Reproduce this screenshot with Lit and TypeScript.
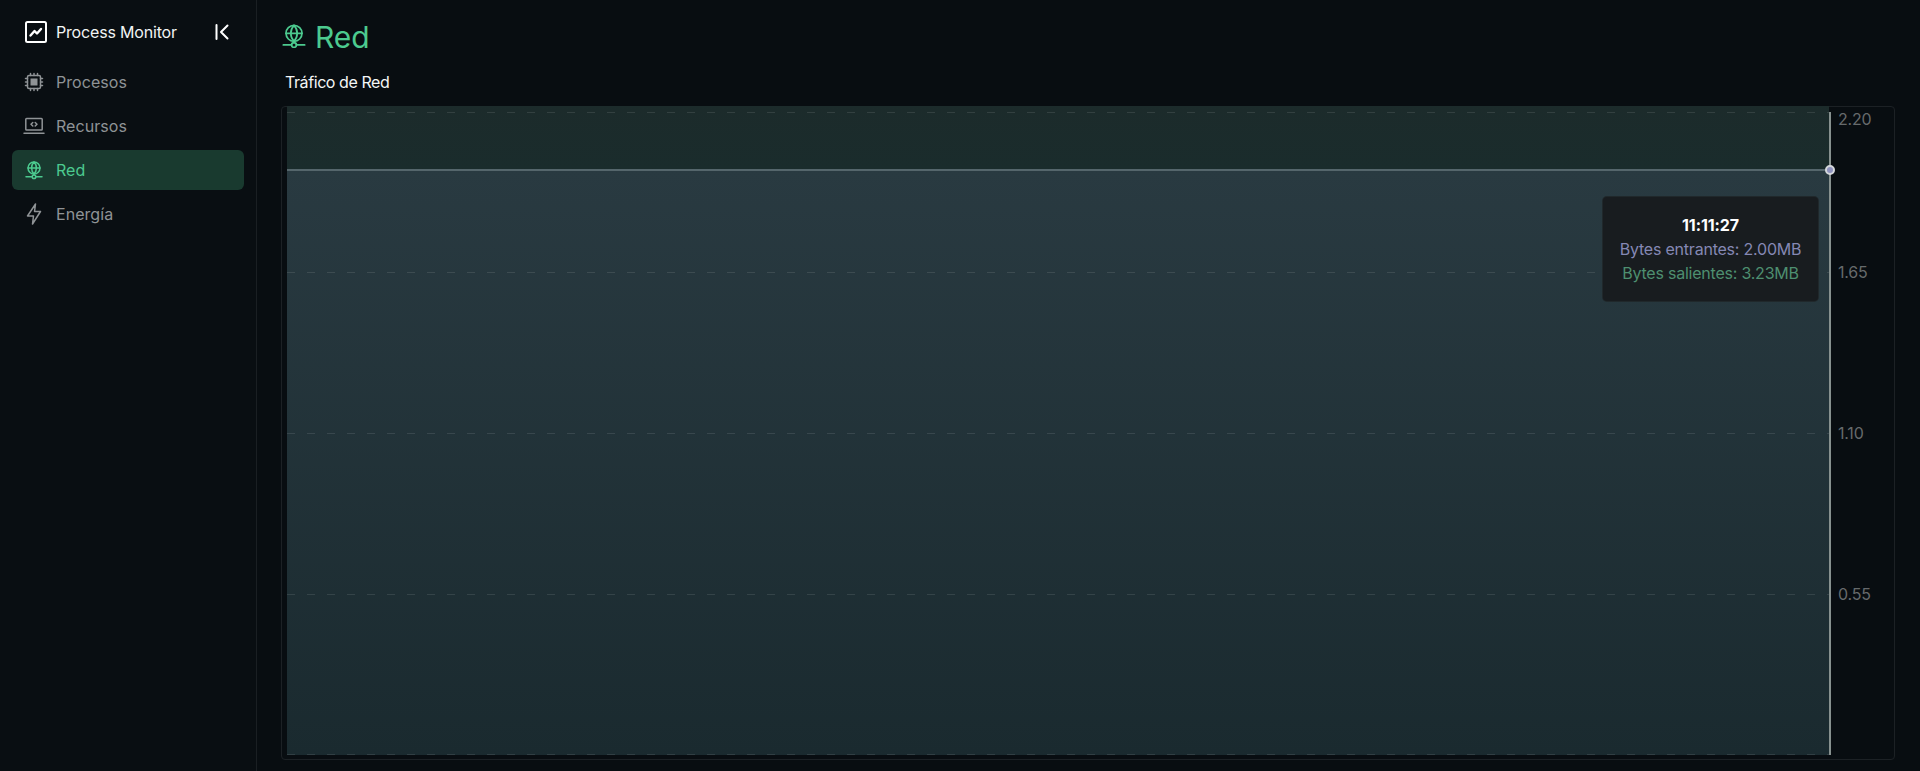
import { LitElement, html, css, svg } from "lit";
import { customElement } from "lit/decorators.js";

const globe = svg`<circle cx="12" cy="10" r="6"/><path d="M6 10h12M12 4c-3.200 3.400-3.200 8.600 0 12M12 4c3.200 3.400 3.200 8.600 0 12M12 16v1M4 18.700h6.200M13.800 18.700H20"/><circle cx="12" cy="18.700" r="1.800"/>`;

const nav = [
  { label: "Procesos", icon: svg`<rect x="5.500" y="5.500" width="13" height="13" rx="1.500"/><rect x="8.500" y="8.500" width="7" height="7" fill="currentColor" stroke="none"/><path d="M8.500 3.500v2M12 3.500v2M15.500 3.500v2M8.500 18.500v2M12 18.500v2M15.500 18.500v2M3.500 8.500h2M3.500 12h2M3.500 15.500h2M18.500 8.500h2M18.500 12h2M18.500 15.500h2"/>` },
  { label: "Recursos", icon: svg`<rect x="3.800" y="4.500" width="16.400" height="11.500" rx="0.800"/><path d="M2 19.200h20M10.800 8.500 9 10.200l1.800 1.800M13.200 8.500l1.800 1.700-1.800 1.800"/>` },
  { label: "Red", active: true, icon: globe },
  { label: "Energía", icon: svg`<path d="M13.500 2 5.500 14h6l-1 8 8-12.500h-6z"/>` },
];

const grid = [
  { y: 112.500, label: "2.20", ty: 125 },
  { y: 272.500, label: "1.65", ty: 278 },
  { y: 433.500, label: "1.10", ty: 439 },
  { y: 594.500, label: "0.55", ty: 600 },
  { y: 754.500, label: "", ty: 0 },
];

@customElement("app-root")
export class AppRoot extends LitElement {
  static styles = css`
    :host {
      display: flex;
      height: 771px;
      overflow: hidden;
      background: #080d11;
      font-family: Inter, "Noto Sans", sans-serif;
      font-size: 16px;
      color: #fff;
    }
    .side {
      box-sizing: border-box;
      flex: 0 0 257px;
      border-right: 1px solid #1a1f23;
      padding: 12px 12px 0;
      background: #090e12;
    }
    .brand {
      display: flex;
      align-items: center;
      height: 40px;
      padding-left: 13px;
      margin-bottom: 10px;
      letter-spacing: -0.18px;
    }
    .brand-name { margin-left: 9px; flex: 1; color: #f2f4f4; }
    .collapse { margin-right: 15px; display: block; }
    .logo { display: block; }
    .item {
      display: flex;
      align-items: center;
      height: 40px;
      margin-bottom: 4px;
      padding-left: 10px;
      border-radius: 6px;
      color: #8f9396;
      letter-spacing: 0.05px;
    }
    .item.active { background: #193a2f; color: #4cca8f; }
    .icon {
      width: 24px;
      height: 24px;
      margin-right: 10px;
      fill: none;
      stroke: currentColor;
      stroke-width: 1.500;
      stroke-linecap: round;
      stroke-linejoin: round;
      flex: none;
    }
    .main { flex: 1; min-width: 0; padding: 0 24px; display: flex; flex-direction: column; }
    h1 {
      margin: 0;
      height: 74px;
      padding-left: 1px;
      display: flex;
      align-items: center;
      font-size: 30px;
      font-weight: 400;
      color: #4cca8f;
      box-sizing: border-box;
    }
    .h-icon {
      width: 24px;
      height: 24px;
      margin: 0 9px 2px 0;
      fill: none;
      stroke: currentColor;
      stroke-width: 1.300;
      stroke-linecap: round;
      stroke-linejoin: round;
    }
    .sub { height: 32px; line-height: 16px; padding-left: 4px; color: #f4f6f6; letter-spacing: -0.42px; }
    .card {
      position: relative;
      width: 1614px;
      height: 654px;
      box-sizing: border-box;
      border: 1px solid #1c2125;
      border-radius: 4px;
    }
    .card svg { position: absolute; left: -282px; top: -107px; display: block; }
    .axis { fill: #666a6c; font-size: 16px; font-family: Inter, sans-serif; letter-spacing: -0.2px; }
    .tip {
      position: absolute;
      left: 1321px;
      top: 90px;
      width: 215px;
      height: 104px;
      box-sizing: border-box;
      padding-top: 16px;
      border-radius: 4px;
      background: #181c1f;
      text-align: center;
      line-height: 24px;
      letter-spacing: -0.22px;
      box-shadow: 0 0 0 1px #20282b;
    }
    .t { font-weight: 700; color: #fff; font-size: 16px; letter-spacing: -0.1px; }
    .a { color: #8588b4; }
    .b { color: #4e8f70; }
  `;

  render() {
    return html`
      <aside class="side">
        <div class="brand">
          <svg class="logo" width="22" height="22" viewBox="0 0 22 22" fill="none" stroke="#fff" stroke-linecap="round" stroke-linejoin="round">
            <rect x="1" y="1" width="20" height="20" rx="1.500" stroke-width="2"/>
            <path d="M5.500 14.500 9.500 10l2.500 2.500L16 8" stroke-width="2.400"/>
          </svg>
          <span class="brand-name">Process Monitor</span>
          <svg class="collapse" width="14" height="16" viewBox="0 0 14 16" fill="none" stroke="#fff" stroke-width="2" stroke-linecap="round" stroke-linejoin="round">
            <path d="M1.500 1v14M12.500 1.500 6 8l6.500 6.500"/>
          </svg>
        </div>
        ${nav.map(
          (n) => html`<div class="item ${n.active ? "active" : ""}">
            <svg class="icon" viewBox="0 0 24 24">${n.icon}</svg><span>${n.label}</span>
          </div>`
        )}
      </aside>
      <main class="main">
        <h1><svg class="h-icon" viewBox="3 3 18 18">${globe}</svg>Red</h1>
        <div class="sub">Tráfico de Red</div>
        <div class="card">
          <svg width="1920" height="771" viewBox="0 0 1920 771">
            <defs>
              <linearGradient id="g1" x1="0" y1="0" x2="0" y2="1">
                <stop offset="0" stop-color="#1c2b2b"/>
                <stop offset="1" stop-color="#1a2c2c"/>
              </linearGradient>
              <linearGradient id="g2" x1="0" y1="0" x2="0" y2="1">
                <stop offset="0" stop-color="#293a41"/>
                <stop offset="1" stop-color="#1a2a2f"/>
              </linearGradient>
            </defs>
            <rect x="287" y="106" width="1542" height="64" fill="url(#g1)"/>
            <rect x="287" y="170" width="1542" height="585" fill="url(#g2)"/>
            ${grid.map(
              (g) => svg`<line x1="287" x2="1829" y1=${g.y} y2=${g.y} stroke="#ffffff" stroke-opacity="0.100" stroke-dasharray="8 12"/>
                ${g.label ? svg`<text class="axis" x="1838" y=${g.ty}>${g.label}</text>` : ""}`
            )}
            <line x1="287" x2="1829" y1="170" y2="170" stroke="#55666c" stroke-width="2"/>
            <line x1="1830" x2="1830" y1="112" y2="755" stroke="#87918f" stroke-width="2"/>
            <circle cx="1830" cy="170" r="4" fill="#8e92bd" stroke="#d5d8dc" stroke-width="2"/>
          </svg>
          <div class="tip">
            <div class="t">11:11:27</div>
            <div class="a">Bytes entrantes: 2.00MB</div>
            <div class="b">Bytes salientes: 3.23MB</div>
          </div>
        </div>
      </main>
    `;
  }
}
